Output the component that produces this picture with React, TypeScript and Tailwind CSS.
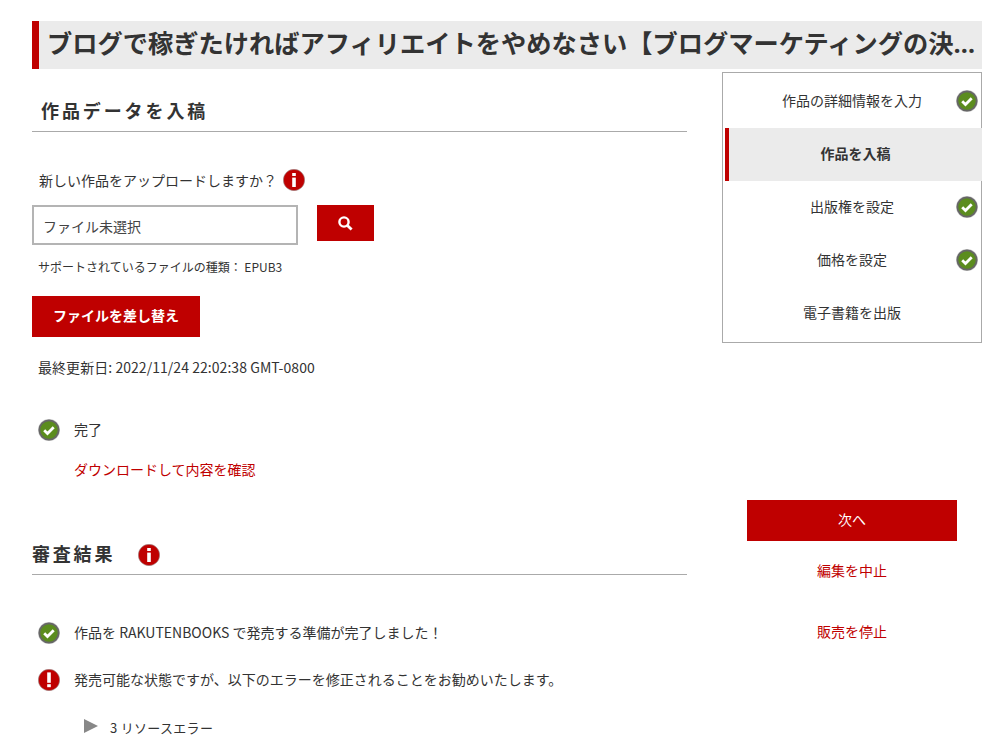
const font = "font-['Noto_Sans_CJK_JP',sans-serif]"

function CheckIcon() {
  return (
    <svg width="22" height="22" viewBox="0 0 22 22" className="shrink-0">
      <circle cx="11" cy="11" r="11" fill="#c8c8c8" />
      <circle cx="11" cy="11" r="9.6" fill="#5b8c1e" stroke="#666" strokeWidth="1.8" />
      <path d="M6.2 11.2l3.3 3.3 6.2-6.2" fill="none" stroke="#fff" strokeWidth="2.8" />
    </svg>
  )
}

function InfoIcon() {
  return (
    <svg width="22" height="22" viewBox="0 0 22 22" className="shrink-0">
      <circle cx="11" cy="11" r="10.7" fill="#bf0000" stroke="#9a9a9a" strokeWidth="0.6" />
      <rect x="9.2" y="4" width="3.6" height="3" fill="#fff" />
      <rect x="9.2" y="8.6" width="3.6" height="9.4" fill="#fff" />
    </svg>
  )
}

function AlertIcon() {
  return (
    <svg width="22" height="22" viewBox="0 0 22 22" className="shrink-0">
      <circle cx="11" cy="11" r="10.7" fill="#bf0000" stroke="#9a9a9a" strokeWidth="0.6" />
      <rect x="9.2" y="3.4" width="3.6" height="10.4" fill="#fff" />
      <rect x="9.2" y="15.2" width="3.6" height="3" fill="#fff" />
    </svg>
  )
}

function SearchIcon() {
  return (
    <svg width="15" height="15" viewBox="0 0 15 15">
      <circle cx="6" cy="6" r="4.6" fill="none" stroke="#fff" strokeWidth="2.4" />
      <path d="M9.4 9.4L13.6 13.6" fill="none" stroke="#fff" strokeWidth="2.8" />
    </svg>
  )
}

function NavItem({ label, done, active }: { label: string; done?: boolean; active?: boolean }) {
  if (active) {
    return (
      <div className="-mr-px h-[53px] pb-[2px] flex items-center justify-center bg-[#ebebeb] border-l-4 border-[#bf0000] text-[14px] font-bold text-[#333]">
        {label}
      </div>
    )
  }
  return (
    <div className="h-[53px] pb-[2px] pr-[2px] flex items-center justify-center relative text-[14px] text-[#333]">
      {label}
      {done && (
        <span className="absolute right-[3px] top-[15px]">
          <CheckIcon />
        </span>
      )}
    </div>
  )
}

export default function App() {
  return (
    <div className={`${font} w-[1004px] h-[753px] overflow-hidden bg-white pt-[21px] pl-[32px] pr-[22px] text-[#333]`}>
      <h1 className="font-['Open_Sans','Noto_Sans_CJK_JP',sans-serif] h-[48px] border-l-[7px] border-[#bf0000] bg-[#ebebeb] pl-[8px] pr-[4px] leading-[45px] text-[25.25px] font-bold text-[#333] truncate">
        ブログで稼ぎたければアフィリエイトをやめなさい【ブログマーケティングの決定版】
      </h1>

      <div className="flex gap-[35px]">
        <main className="w-[655px]">
          <h2 className="mt-[29px] pl-[9px] h-[34px] border-b border-[#aaa] text-[18px] leading-[24px] font-bold tracking-[2.9px]">
            作品データを入稿
          </h2>

          <div className="mt-[37px] pl-[7px] flex items-center gap-[6px] h-[22px] text-[14px]">
            新しい作品をアップロードしますか？
            <InfoIcon />
          </div>

          <div className="mt-[14px] flex items-start gap-[19px]">
            <div className="w-[266px] h-[40px] border-2 border-[#b4b4b4] pl-[9px] pt-[2px] flex items-center text-[14px] text-[#444]">
              ファイル未選択
            </div>
            <button className="w-[57px] h-[36px] bg-[#bf0000] flex items-center justify-center">
              <SearchIcon />
            </button>
          </div>

          <p className="mt-[14px] pl-[6px] text-[12px] leading-[16px]">サポートされているファイルの種類： EPUB3</p>

          <button className="mt-[21px] w-[168px] h-[41px] pb-[2px] bg-[#bf0000] text-white text-[14px] font-bold">
            ファイルを差し替え
          </button>

          <p className="mt-[20px] pl-[6px] text-[14px] leading-[20px] tracking-[0.05px]">最終更新日: 2022/11/24 22:02:38 GMT-0800</p>

          <div className="mt-[42px] pl-[6px] flex items-center gap-[14px] text-[14px] h-[22px]">
            <CheckIcon />
            <span className="-mt-[2px]">完了</span>
          </div>
          <a className="block mt-[17px] pl-[42px] text-[14px] leading-[22px] text-[#bf0000]">ダウンロードして内容を確認</a>

          <div className="mt-[64px] h-[31px] border-b border-[#aaa] flex items-start gap-[23px]">
            <h2 className="text-[18px] leading-[18px] font-bold tracking-[2.8px]">審査結果</h2>
            <InfoIcon />
          </div>

          <div className="mt-[47px] pl-[6px] flex items-center gap-[14px] text-[14px] h-[22px]">
            <CheckIcon />
            <span className="-mt-[2px]">作品を RAKUTENBOOKS で発売する準備が完了しました！</span>
          </div>
          <div className="mt-[25px] pl-[6px] flex items-center gap-[14px] text-[14px] h-[22px]">
            <AlertIcon />
            <span className="-mt-[2px]">発売可能な状態ですが、以下のエラーを修正されることをお勧めいたします。</span>
          </div>
          <div className="mt-[26px] pl-[52px] flex items-center gap-[12px] text-[13px] h-[22px]">
            <span className="w-0 h-0 border-y-[7px] border-y-transparent border-l-[14px] border-l-[#888] -mt-[5px]" />
            <span className="tracking-[0.3px]">3 リソースエラー</span>
          </div>
        </main>

        <aside className="w-[260px] pt-[3px]">
          <nav className="h-[271px] border border-[#aaa] pt-[2px] pl-[2px]">
            <NavItem label="作品の詳細情報を入力" done />
            <NavItem label="作品を入稿" active />
            <NavItem label="出版権を設定" done />
            <NavItem label="価格を設定" done />
            <NavItem label="電子書籍を出版" />
          </nav>
          <div className="mt-[157px] flex flex-col items-center text-[14px] text-[#bf0000]">
            <button className="w-[210px] h-[41px] pb-[2px] bg-[#bf0000] text-white">次へ</button>
            <a className="mt-[19px] leading-[20px]">編集を中止</a>
            <a className="mt-[41px] leading-[20px]">販売を停止</a>
          </div>
        </aside>
      </div>
    </div>
  )
}
